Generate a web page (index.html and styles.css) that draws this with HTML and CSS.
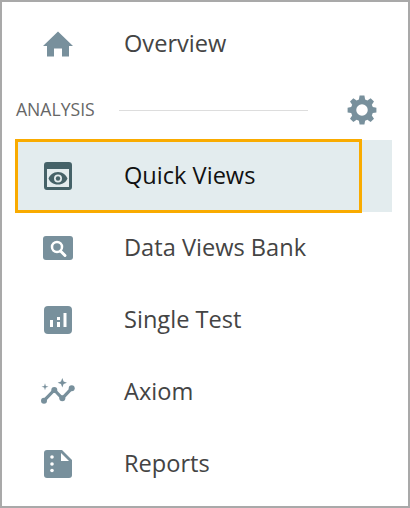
FILE: index.html
```html
<!DOCTYPE html>
<html lang="en">
<head>
  <meta charset="UTF-8">
  <meta name="viewport" content="width=device-width, initial-scale=1.0">
  <title>Analysis menu</title>
  <link rel="stylesheet" href="styles.css">
</head>
<body>
  <div class="frame">
    <div class="nav-item">
      <svg class="nav-icon" viewBox="0 0 30 30"><path d="M15 2.500 L30 17 H26 V27.500 H19 V19.500 H11 V27.500 H4 V17 H0 Z" fill="#78909c"/></svg>
      <span class="nav-label">Overview</span>
    </div>
    <div class="section-head">
      <span class="section-title">ANALYSIS</span>
      <span class="section-line"></span>
      <svg class="gear" viewBox="-.5 -.5 25 25"><path fill-rule="evenodd" d="M10 0h4l.6 3.2 1.9.8L19.200 2.200l2.800 2.800-1.800 2.700.8 1.900L24 10.200v3.800l-3 .6-.8 1.900 1.800 2.700-2.800 2.800-2.700-1.800-1.900.8L14 24h-4l-.6-3-1.900-.8-2.700 1.800L2 19.200l1.800-2.700-.8-1.900L0 14v-3.800l3-.6.8-1.900L2 5l2.800-2.800L7.500 4l1.900-.8zM12 7.200a4.800 4.800 0 1 0 0 9.600 4.800 4.800 0 0 0 0-9.600z" fill="#78909c"/></svg>
    </div>
    <div class="nav-active">
      <div class="nav-item nav-outline">
        <svg class="nav-icon" viewBox="-1 -1 30 30"><path fill-rule="evenodd" d="M3 0h22a3 3 0 0 1 3 3v22a3 3 0 0 1-3 3H3a3 3 0 0 1-3-3V3a3 3 0 0 1 3-3zM3 7v18h22V7z" fill="#456268"/><path fill-rule="evenodd" d="M14 10c5 0 8 3 9.500 6.500-1.500 3.500-4.500 6-9.500 6s-8-2.500-9.500-6c1.500-3.500 4.500-6.500 9.500-6.500zm0 2.500a4 4 0 1 0 0 8 4 4 0 0 0 0-8z" fill="#456268"/><circle cx="14" cy="16.500" r="2.200" fill="#456268"/></svg>
        <span class="nav-label label-active">Quick Views</span>
      </div>
    </div>
    <div class="nav-item">
      <svg class="nav-icon" viewBox="0 -3 30 30"><rect width="30" height="24" rx="3" fill="#78909c"/><circle cx="14" cy="11" r="5" fill="none" stroke="#fff" stroke-width="2.500"/><path d="M17.500 15 L22 19.500" stroke="#fff" stroke-width="3" stroke-linecap="round"/></svg>
      <span class="nav-label">Data Views Bank</span>
    </div>
    <div class="nav-item">
      <svg class="nav-icon" viewBox="-1 -1 30 30"><rect width="28" height="28" rx="4" fill="#78909c"/><rect x="6" y="14" width="3" height="7" fill="#fff"/><rect x="13" y="16" width="3" height="5" fill="#fff"/><rect x="13" y="11" width="3" height="3" fill="#fff"/><rect x="19.500" y="7" width="3" height="14" fill="#fff"/></svg>
      <span class="nav-label">Single Test</span>
    </div>
    <div class="nav-item">
      <svg class="nav-icon icon-wide" viewBox="0 0 34 30"><path d="M3 23.700 L13.300 13 L21.300 21.300 L30.700 11.300" fill="none" stroke="#78909c" stroke-width="3.200" stroke-linejoin="round" stroke-linecap="round"/><circle cx="3" cy="23.700" r="3" fill="#78909c"/><circle cx="13.300" cy="13" r="3" fill="#78909c"/><circle cx="21.300" cy="21.300" r="3" fill="#78909c"/><circle cx="30.700" cy="11.300" r="3" fill="#78909c"/><path d="M21.300 1 L22.600 4.400 L26 5.700 L22.600 7 L21.300 10.400 L20 7 L16.600 5.700 L20 4.400 Z" fill="#78909c"/><path d="M4 6.200 L4.800 8.900 L7.500 9.700 L4.800 10.500 L4 13.200 L3.200 10.500 L.5 9.700 L3.200 8.900 Z" fill="#78909c"/></svg>
      <span class="nav-label">Axiom</span>
    </div>
    <div class="nav-item">
      <svg class="nav-icon" viewBox="-1 -1 30 30"><path d="M3 0 H18 L28 10 V25 a3 3 0 0 1-3 3 H3 a3 3 0 0 1-3-3 V3 a3 3 0 0 1 3-3z" fill="#78909c"/><path d="M17 3 L25 11 H17 Z" fill="#fff"/><circle cx="8" cy="7" r="1.800" fill="#fff"/><circle cx="8" cy="14" r="1.800" fill="#fff"/><circle cx="8" cy="20.500" r="1.800" fill="#fff"/></svg>
      <span class="nav-label">Reports</span>
    </div>
  </div>
</body>
</html>
```

FILE: styles.css
```css
body {
  margin: 0;
  background-color: #fff;
  font-family: "Open Sans", "Noto Sans", sans-serif;
}
.frame {
  box-sizing: border-box;
  width: 410px;
  height: 508px;
  padding: 6px 16px 0 14px;
  border: 2px solid #a9a9a9;
}
.nav-item {
  display: flex;
  align-items: center;
  height: 72px;
}
.nav-icon {
  width: 30px;
  height: 30px;
  margin-left: 27px;
  margin-right: 51px;
  flex-shrink: 0;
}
.icon-wide {
  width: 34px;
  margin-left: 25px;
  margin-right: 49px;
}
.nav-label {
  font-size: 23.6px;
  color: #444;
  padding-bottom: 2px;
}
.label-active {
  color: #111;
}
.section-head {
  display: flex;
  align-items: center;
  height: 60px;
}
.section-title {
  font-size: 17.6px;
  color: #666;
  width: 103px;
  padding-bottom: 2px;
}
.section-line {
  width: 189px;
  height: 1px;
  background-color: #ddd;
}
.gear {
  width: 30px;
  height: 30px;
  margin-left: 39px;
}
.nav-active {
  display: flex;
  align-items: flex-start;
  width: 376px;
  height: 72px;
  background-color: #e3ecee;
}
.nav-outline {
  box-sizing: border-box;
  width: 347px;
  height: 74px;
  margin: -1px 0 0 -1px;
  border: 3px solid #f9ab00;
}
.nav-outline .nav-icon {
  margin-left: 25px;
}
```
